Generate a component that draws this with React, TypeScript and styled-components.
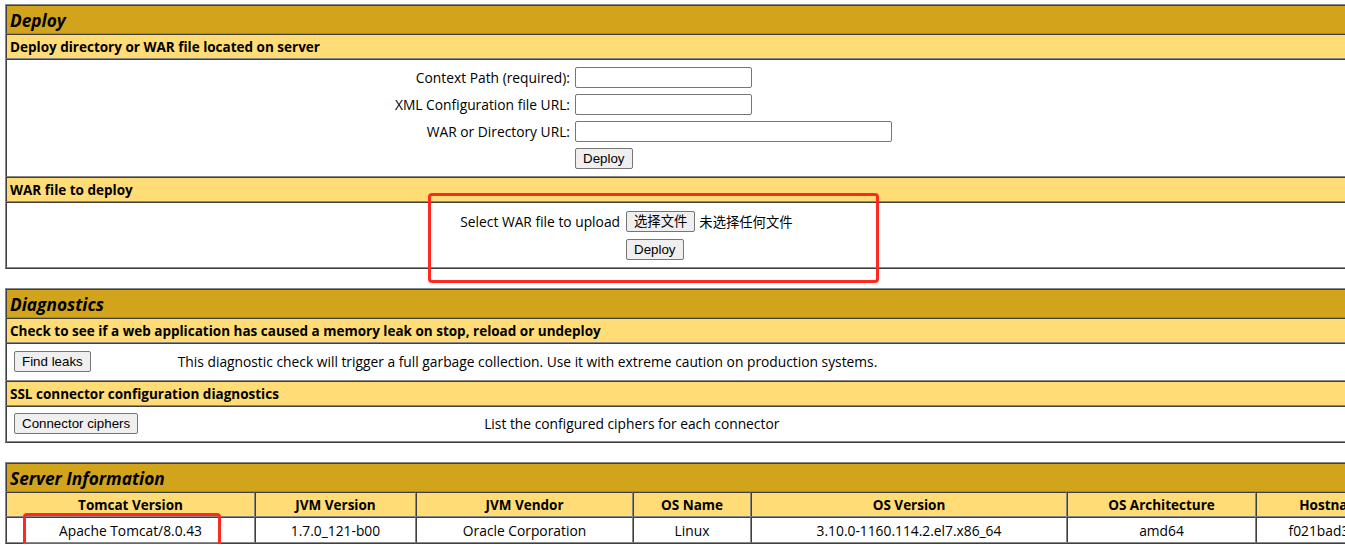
import React from "react";
import styled, { createGlobalStyle } from "styled-components";

const TEXT_FONT = `"Open Sans", "Noto Sans", "Noto Sans CJK SC", sans-serif`;
const BTN_FONT = `"Liberation Sans", Arial, "Noto Sans CJK SC", sans-serif`;
const DARK = "#404040";
const LIGHT = "#878787";

const GlobalStyle = createGlobalStyle`
  html, body {
    margin: 0;
    padding: 0;
    overflow: hidden;
    background: #ffffff;
  }
  body {
    font-family: ${TEXT_FONT};
    font-size: 13.8px;
    color: #000;
  }
`;

const Page = styled.div`
  position: relative;
  width: 1548px;
  padding: 4px 0 0 5px;
  display: flex;
  flex-direction: column;
  gap: 19px;
`;

const Panel = styled.section`
  border: 1px solid;
  border-color: ${LIGHT} ${DARK} ${DARK} ${LIGHT};
  display: flex;
  flex-direction: column;
`;

const Cell = styled.div`
  border: 1px solid;
  border-color: ${DARK} ${LIGHT} ${LIGHT} ${DARK};
`;

const TitleCell = styled(Cell)`
  background: #d2a41c;
  padding: 4px 3px 2px;
  font-family: ${TEXT_FONT};
  font-size: 17.3px;
  line-height: 21px;
  font-weight: 700;
  font-style: italic;
`;

const HeaderCell = styled(Cell)`
  background: #ffdc75;
  padding: 4px 3px 2px;
  font-size: 13.5px;
  line-height: 17px;
  font-weight: 700;
  white-space: nowrap;
`;

const BodyCell = styled(Cell)<{ $pt: number; $pb: number }>`
  background: #fff;
  padding: ${(p) => p.$pt}px 0 ${(p) => p.$pb}px 0;
`;

const FormGrid = styled.div<{ $left: number; $label: number; $gap: number; $rowGap: number }>`
  margin-left: ${(p) => p.$left}px;
  display: grid;
  grid-template-columns: ${(p) => p.$label}px auto;
  column-gap: ${(p) => p.$gap}px;
  row-gap: ${(p) => p.$rowGap}px;
  align-items: center;
  justify-content: start;
`;

const Label = styled.label`
  text-align: right;
  white-space: nowrap;
  font-size: 13.8px;
  line-height: 18px;
`;

const TextInput = styled.input<{ $w: number }>`
  box-sizing: border-box;
  width: ${(p) => p.$w}px;
  height: 21px;
  border: 1px solid #767676;
  border-radius: 2px;
  padding: 1px 2px;
  background: #fff;
  font-family: ${BTN_FONT};
  font-size: 13.33px;
`;

const Control = styled.div`
  display: flex;
  align-items: center;
  gap: 4px;
  grid-column: 2;
`;

const Button = styled.button`
  box-sizing: border-box;
  height: 21px;
  padding: 0 7px;
  border: 1px solid #767676;
  border-radius: 2px;
  background: #efefef;
  color: #000;
  font-family: ${BTN_FONT};
  font-size: 13.33px;
  line-height: 17px;
  white-space: nowrap;
  justify-self: start;
`;

const FileHint = styled.span`
  font-family: "Noto Sans CJK SC", sans-serif;
  font-size: 13.33px;
  line-height: 18px;
`;

const DiagRow = styled.div`
  display: flex;
  align-items: center;
  padding-left: 7px;
`;

const DiagText = styled.span<{ $offset: number }>`
  margin-left: ${(p) => p.$offset}px;
  font-size: 13.8px;
  line-height: 18px;
  white-space: nowrap;
`;

const InfoTable = styled.table`
  border-collapse: separate;
  border-spacing: 0;
  table-layout: fixed;
  width: 100%;
  border: 1px solid;
  border-color: ${LIGHT} ${DARK} ${DARK} ${LIGHT};
`;

const InfoTitle = styled.td`
  box-sizing: border-box;
  border: 1px solid;
  border-color: ${DARK} ${LIGHT} ${LIGHT} ${DARK};
  background: #d2a41c;
  padding: 4px 3px 2px;
  font-size: 17.3px;
  line-height: 21px;
  font-weight: 700;
  font-style: italic;
  text-align: left;
`;

const InfoHead = styled.th`
  box-sizing: border-box;
  border: 1px solid;
  border-color: ${DARK} ${LIGHT} ${LIGHT} ${DARK};
  background: #ffdc75;
  padding: 4px 3px 2px;
  font-size: 13.5px;
  line-height: 17px;
  font-weight: 700;
  text-align: center;
  white-space: nowrap;
  overflow: hidden;
`;

const InfoData = styled.td`
  box-sizing: border-box;
  border: 1px solid;
  border-color: ${DARK} ${LIGHT} ${LIGHT} ${DARK};
  background: #fff;
  padding: 4px 3px 2px;
  font-size: 13.8px;
  line-height: 18px;
  text-align: center;
  white-space: nowrap;
  overflow: hidden;
`;

const Highlight = styled.div<{ $x: number; $y: number; $w: number; $h: number }>`
  position: absolute;
  left: ${(p) => p.$x}px;
  top: ${(p) => p.$y}px;
  width: ${(p) => p.$w}px;
  height: ${(p) => p.$h}px;
  box-sizing: border-box;
  border: 3px solid #ff2a1f;
  border-radius: 4px;
  pointer-events: none;
`;

const columns = [
  { head: "Tomcat Version", value: "Apache Tomcat/8.0.43", width: 249 },
  { head: "JVM Version", value: "1.7.0_121-b00", width: 161 },
  { head: "JVM Vendor", value: "Oracle Corporation", width: 217 },
  { head: "OS Name", value: "Linux", width: 118 },
  { head: "OS Version", value: "3.10.0-1160.114.2.el7.x86_64", width: 316 },
  { head: "OS Architecture", value: "amd64", width: 189 },
  { head: "Hostname", value: "f021bad3c9e1", width: 156 },
  { head: "IP Address", value: "172.17.0.2", width: 140 },
];

export default function App() {
  return (
    <>
      <GlobalStyle />
      <Page>
        <Panel>
          <TitleCell>Deploy</TitleCell>
          <HeaderCell>Deploy directory or WAR file located on server</HeaderCell>
          <BodyCell $pt={7} $pb={7}>
            <FormGrid $left={373} $label={190} $gap={5} $rowGap={6}>
              <Label>Context Path (required):</Label>
              <TextInput $w={177} />
              <Label>XML Configuration file URL:</Label>
              <TextInput $w={177} />
              <Label>WAR or Directory URL:</Label>
              <TextInput $w={317} />
              <Control>
                <Button>Deploy</Button>
              </Control>
            </FormGrid>
          </BodyCell>
          <HeaderCell>WAR file to deploy</HeaderCell>
          <BodyCell $pt={8} $pb={7}>
            <FormGrid $left={443} $label={170} $gap={6} $rowGap={7}>
              <Label>Select WAR file to upload</Label>
              <Control>
                <Button>选择文件</Button>
                <FileHint>未选择任何文件</FileHint>
              </Control>
              <Control>
                <Button>Deploy</Button>
              </Control>
            </FormGrid>
          </BodyCell>
        </Panel>

        <Panel>
          <TitleCell>Diagnostics</TitleCell>
          <HeaderCell>
            Check to see if a web application has caused a memory leak on stop, reload or undeploy
          </HeaderCell>
          <BodyCell $pt={7} $pb={8}>
            <DiagRow>
              <Button>Find leaks</Button>
              <DiagText $offset={87}>
                This diagnostic check will trigger a full garbage collection. Use it with extreme
                caution on production systems.
              </DiagText>
            </DiagRow>
          </BodyCell>
          <HeaderCell>SSL connector configuration diagnostics</HeaderCell>
          <BodyCell $pt={6} $pb={7}>
            <DiagRow>
              <Button>Connector ciphers</Button>
              <DiagText $offset={346}>List the configured ciphers for each connector</DiagText>
            </DiagRow>
          </BodyCell>
        </Panel>

        <InfoTable>
          <colgroup>
            {columns.map((c) => (
              <col key={c.head} style={{ width: c.width }} />
            ))}
          </colgroup>
          <tbody>
            <tr>
              <InfoTitle colSpan={columns.length}>Server Information</InfoTitle>
            </tr>
            <tr>
              {columns.map((c) => (
                <InfoHead key={c.head}>{c.head}</InfoHead>
              ))}
            </tr>
            <tr>
              {columns.map((c) => (
                <InfoData key={c.head}>{c.value}</InfoData>
              ))}
            </tr>
          </tbody>
        </InfoTable>

        <Highlight $x={428} $y={193} $w={451} $h={90} />
        <Highlight $x={23} $y={513} $w={198} $h={33} />
      </Page>
    </>
  );
}
